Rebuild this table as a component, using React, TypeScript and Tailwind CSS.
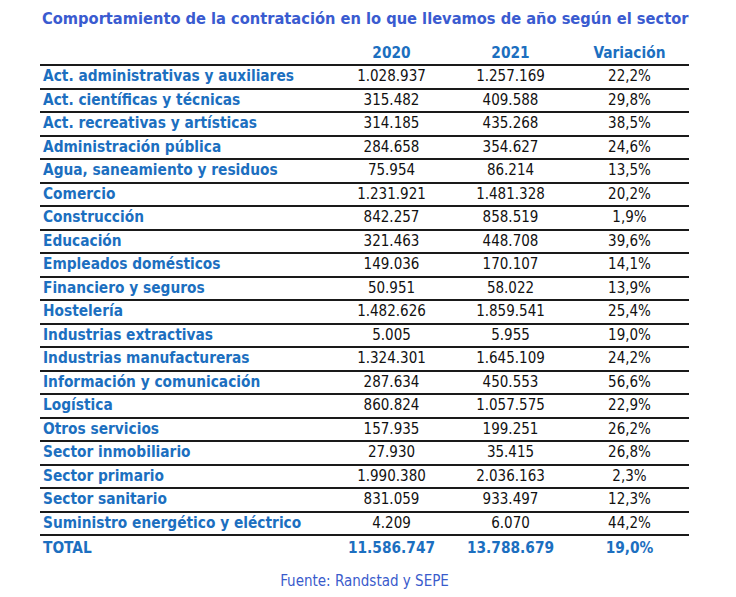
const ROWS: [string, string, string, string][] = [
  ['Act. administrativas y auxiliares', '1.028.937', '1.257.169', '22,2%'],
  ['Act. científicas y técnicas', '315.482', '409.588', '29,8%'],
  ['Act. recreativas y artísticas', '314.185', '435.268', '38,5%'],
  ['Administración pública', '284.658', '354.627', '24,6%'],
  ['Agua, saneamiento y residuos', '75.954', '86.214', '13,5%'],
  ['Comercio', '1.231.921', '1.481.328', '20,2%'],
  ['Construcción', '842.257', '858.519', '1,9%'],
  ['Educación', '321.463', '448.708', '39,6%'],
  ['Empleados domésticos', '149.036', '170.107', '14,1%'],
  ['Financiero y seguros', '50.951', '58.022', '13,9%'],
  ['Hostelería', '1.482.626', '1.859.541', '25,4%'],
  ['Industrias extractivas', '5.005', '5.955', '19,0%'],
  ['Industrias manufactureras', '1.324.301', '1.645.109', '24,2%'],
  ['Información y comunicación', '287.634', '450.553', '56,6%'],
  ['Logística', '860.824', '1.057.575', '22,9%'],
  ['Otros servicios', '157.935', '199.251', '26,2%'],
  ['Sector inmobiliario', '27.930', '35.415', '26,8%'],
  ['Sector primario', '1.990.380', '2.036.163', '2,3%'],
  ['Sector sanitario', '831.059', '933.497', '12,3%'],
  ['Suministro energético y eléctrico', '4.209', '6.070', '44,2%'],
]

const font = { fontFamily: '"DejaVu Sans Condensed", "DejaVu Sans", sans-serif' }

export default function App() {
  return (
    <div className="w-[736px] h-[597px] bg-white" style={font}>
      <div className="pl-[42px] pt-[9px]">
        <h1 className="text-[16.3px] leading-[20px] font-bold text-[#3a5bd0] whitespace-nowrap">
          Comportamiento de la contratación en lo que llevamos de año según el sector
        </h1>
      </div>

      <div className="ml-[40px] w-[649px] mt-[13px]">
        {/* Header */}
        <div className="grid grid-cols-[292px_119px_119px_119px] h-[24px] items-center border-b-2 border-[#1a1a1a] text-[15.3px] font-bold text-[#1c6fc0]">
          <span />
          <span className="text-center">2020</span>
          <span className="text-center">2021</span>
          <span className="text-center">Variación</span>
        </div>

        {ROWS.map(([label, a, b, v]) => (
          <div
            key={label}
            className="grid grid-cols-[292px_119px_119px_119px] h-[23.5px] items-center border-b-2 border-[#1a1a1a] text-[15px] leading-none"
          >
            <span className="pl-[3px] text-[15.3px] font-bold text-[#1c6fc0] whitespace-nowrap">{label}</span>
            <span className="text-center text-[#111]">{a}</span>
            <span className="text-center text-[#111]">{b}</span>
            <span className="text-center text-[#111]">{v}</span>
          </div>
        ))}

        {/* Total */}
        <div className="grid grid-cols-[292px_119px_119px_119px] h-[24px] items-center text-[15.3px] font-bold text-[#1c6fc0]">
          <span className="pl-[3px]">TOTAL</span>
          <span className="text-center">11.586.747</span>
          <span className="text-center">13.788.679</span>
          <span className="text-center">19,0%</span>
        </div>

        <p className="mt-[10px] text-center text-[15px] text-[#3a5bcc]">Fuente: Randstad y SEPE</p>
      </div>
    </div>
  )
}
